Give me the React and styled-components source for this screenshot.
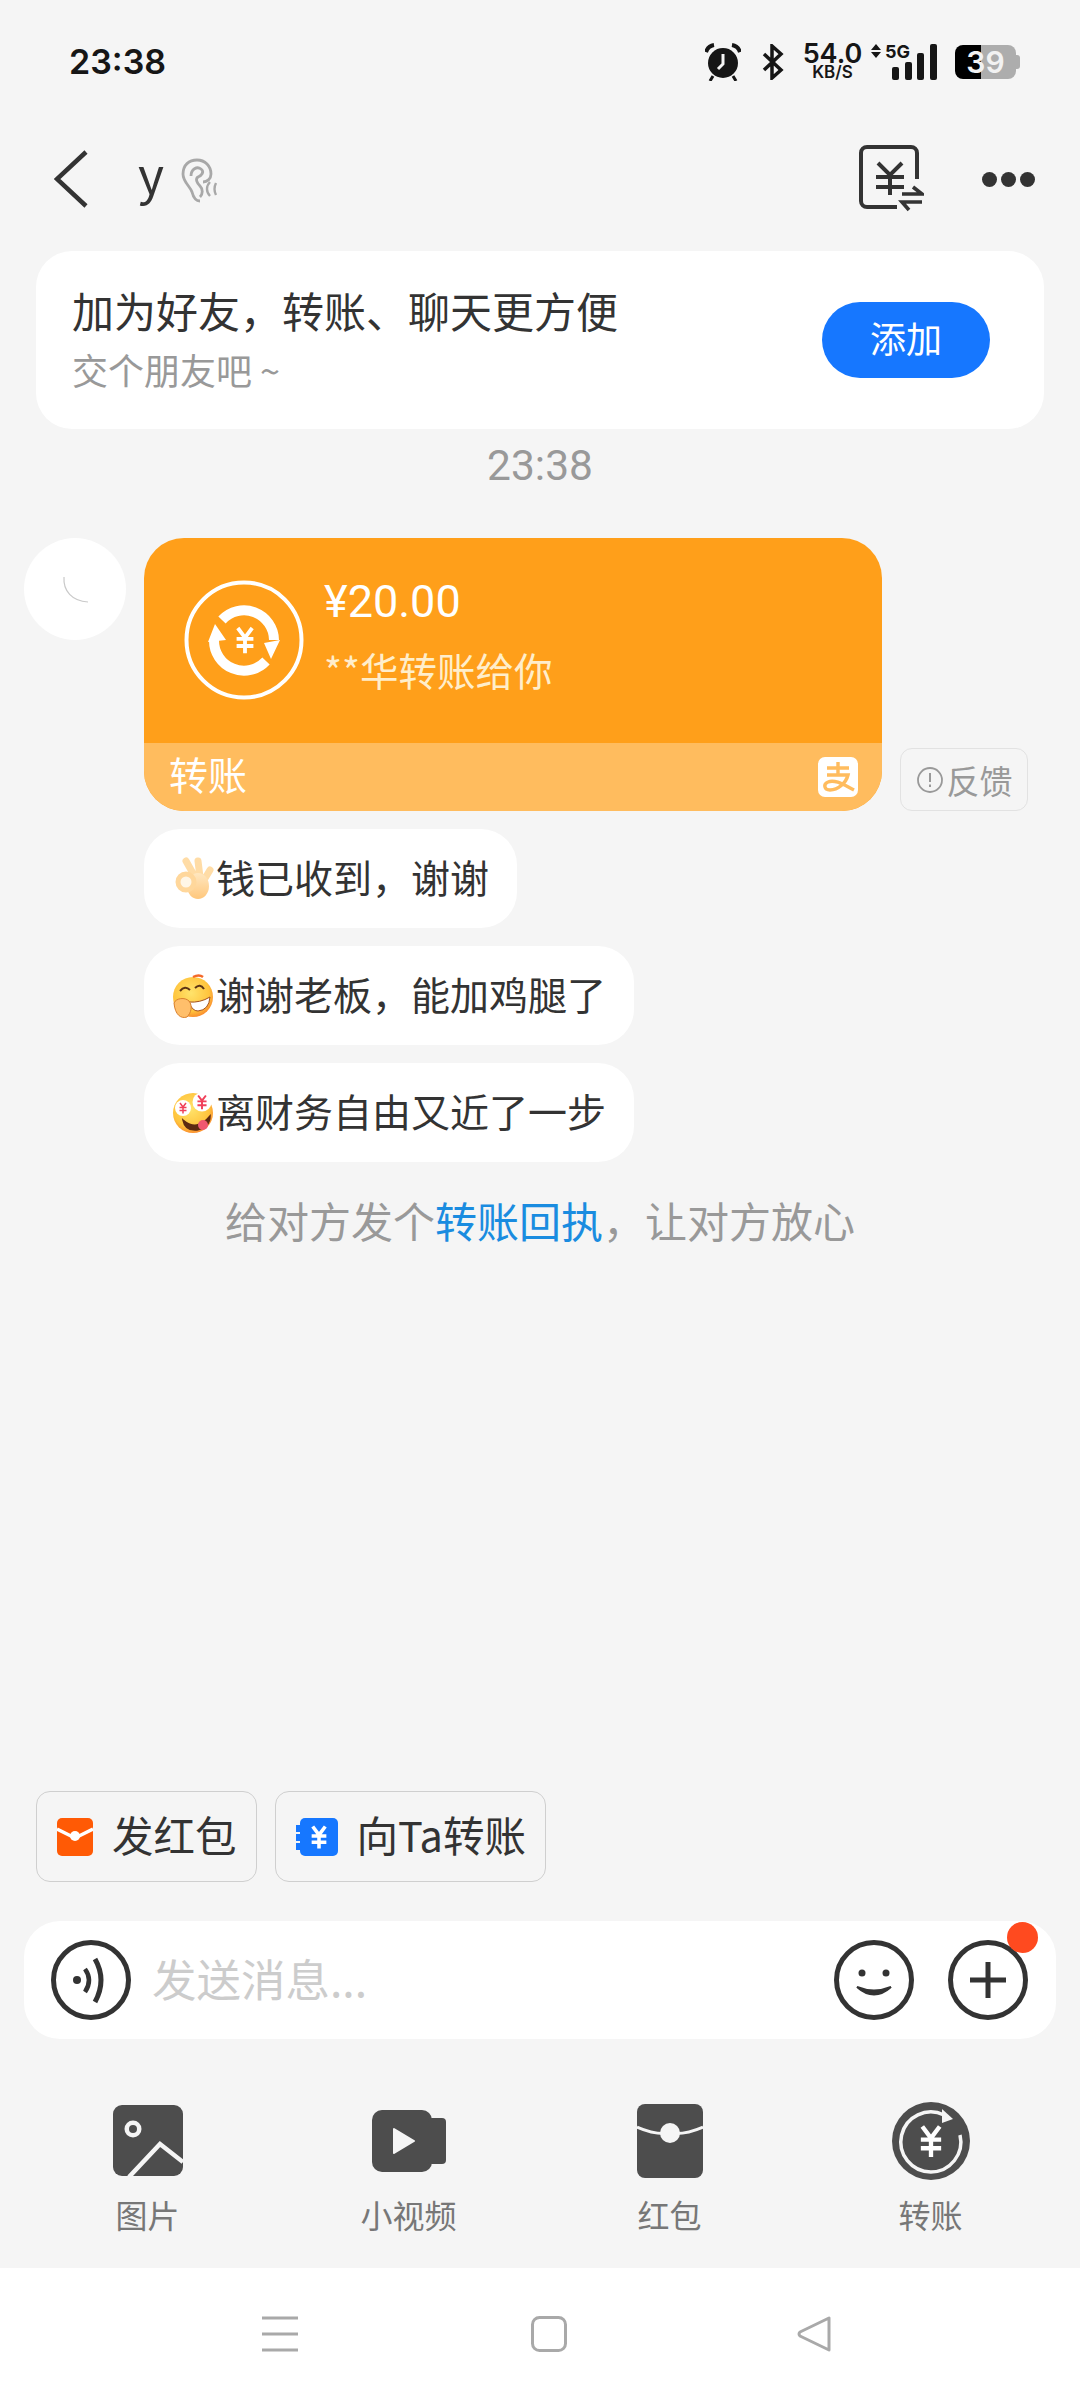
import React from "react";
import styled, { createGlobalStyle } from "styled-components";

const GlobalStyle = createGlobalStyle`
  html, body {
    margin: 0;
    padding: 0;
    background: #f5f5f5;
  }
  * {
    box-sizing: border-box;
  }
`;

const cjk = `"Noto Sans CJK SC", "Noto Sans", sans-serif`;

// yuan sign used inside several icons, drawn around 0,0
const Yuan = ({ x, y, s = 1, color = "#fff", w = 3 }) => (
  <path
    transform={`translate(${x} ${y}) scale(${s})`}
    d="M-6-10 0-2 6-10M0-2V11M-7-1H7M-7 5H7"
    fill="none"
    stroke={color}
    strokeWidth={w}
  />
);

const App = () => {
  return (
    <Page>
      <GlobalStyle />

      <StatusBar>
        <Clock>23:38</Clock>
        <StatusIcons>
          <svg width="36" height="38" viewBox="0 0 36 38">
            <circle cx="18" cy="20" r="15" fill="#161616" />
            <path d="M18 11v10l-5 5" fill="none" stroke="#f5f5f5" strokeWidth="3" />
            <path d="M1 9Q3 3 9 2M35 9Q33 3 27 2" fill="none" stroke="#161616" strokeWidth="4" />
            <path d="M8 33 5 38M28 33l3 5" stroke="#161616" strokeWidth="3" />
          </svg>
          <svg width="22" height="36" viewBox="0 0 22 36">
            <path d="M2 10 19 26 10 34V2l9 8L2 26" fill="none" stroke="#161616" strokeWidth="3.5" />
          </svg>
          <Speed>
            <b>54.0</b>
            <span>KB/S</span>
          </Speed>
          <Signal>
            <svg width="67" height="36" viewBox="0 0 67 36">
              <path d="M5 0 10 6H0ZM5 14 10 8H0Z" fill="#161616" />
              <rect x="21" y="23" width="7" height="13" rx="2" fill="#161616" />
              <rect x="34" y="18" width="7" height="18" rx="2" fill="#161616" />
              <rect x="46" y="9" width="7" height="27" rx="2" fill="#161616" />
              <rect x="59" y="0" width="7" height="36" rx="2" fill="#161616" />
            </svg>
            <FiveG>5G</FiveG>
          </Signal>
          <Battery>39</Battery>
        </StatusIcons>
      </StatusBar>

      <NavBar>
        <NavLeft>
          <svg width="34" height="58" viewBox="0 0 34 58">
            <path d="M32 2 3 29 32 56" fill="none" stroke="#333" strokeWidth="4.5" />
          </svg>
          <NavName>y</NavName>
          <svg width="55" height="55" viewBox="0 0 55 55">
            <path
              d="M27 49C22 49 20 44 19 40 17 34 10 30 10 22 10 13 16 8 24 8 32 8 38 14 38 22 38 27 34 30 30 30"
              fill="none"
              stroke="#a8a8a8"
              strokeWidth="2.8"
            />
            <path d="M18 24C18 17 24 14 28 17 32 20 28 24 25 25 22 27 24 31 27 34 30 37 30 42 27 45" fill="none" stroke="#a8a8a8" strokeWidth="2.8" />
            <path d="M37 30C33 34 33 40 37 44M43 31C41 35 41 39 43 43" fill="none" stroke="#a8a8a8" strokeWidth="2.4" />
          </svg>
        </NavLeft>
        <NavRight>
          <svg width="66" height="68" viewBox="0 0 66 68">
            <path d="M39 62H9a6 6 0 0 1-6-6V8a6 6 0 0 1 6-6h44a6 6 0 0 1 6 6V34" fill="none" stroke="#333" strokeWidth="4" />
            <path d="M20 18 32 30 44 18M18 32H46M18 42H46M32 30V50" fill="none" stroke="#333" strokeWidth="4" />
            <path d="M44 49H64L55 42M64 57H44L51 65" fill="none" stroke="#333" strokeWidth="3.6" />
          </svg>
          <Dots>
            <i />
            <i />
            <i />
          </Dots>
        </NavRight>
      </NavBar>

      <Chat>
        <FriendCard>
          <FriendText>
            <FriendTitle>加为好友，转账、聊天更方便</FriendTitle>
            <FriendSub>交个朋友吧 ~</FriendSub>
          </FriendText>
          <AddButton>添加</AddButton>
        </FriendCard>

        <TimeLabel>23:38</TimeLabel>

        <MessageRow>
          <Avatar>
            <svg width="30" height="32" viewBox="0 0 30 32">
              <path d="M3 3c-1 14 8 24 24 25" fill="none" stroke="#c9c9c9" strokeWidth="1.2" />
            </svg>
          </Avatar>
          <TransferCard>
            <TransferTop>
              <svg width="120" height="120" viewBox="0 0 120 120">
                <circle cx="60" cy="60" r="57.500" fill="none" stroke="#fff" strokeWidth="4" />
                <path d="M38 40A30 30 0 0 1 90 60" fill="none" stroke="#fff" strokeWidth="10" />
                <path d="M30 60A30 30 0 0 0 82 81" fill="none" stroke="#fff" strokeWidth="10" />
                <path d="M31 44 24 62 42 60ZM80 63 96 60 87 79Z" fill="#fff" />
                <Yuan x={61} y={60} s={1.2} w={3.2} />
              </svg>
              <TransferText>
                <Amount>¥20.00</Amount>
                <Payer>**华转账给你</Payer>
              </TransferText>
            </TransferTop>
            <TransferFoot>
              <FootLabel>转账</FootLabel>
              <AlipayMark>
                <svg width="40" height="40" viewBox="0 0 40 40">
                  <rect width="40" height="40" rx="7" fill="#fff" />
                  <path
                    d="M9 11H31M20 5V18M9 18H30C28 26 20 33 12 33 6 33 5 27 10 25 17 22 26 28 36 33"
                    fill="none"
                    stroke="#ffbc5e"
                    strokeWidth="3.4"
                  />
                </svg>
              </AlipayMark>
            </TransferFoot>
          </TransferCard>
          <Feedback>
            <svg width="28" height="28" viewBox="0 0 28 28">
              <circle cx="14" cy="14" r="12" fill="none" stroke="#999" strokeWidth="1.8" />
              <path d="M14 7v9M14 18.500v2.500" stroke="#999" strokeWidth="2" />
            </svg>
            反馈
          </Feedback>
        </MessageRow>

        <Bubble>
          <svg width="42" height="44" viewBox="0 0 42 44">
            <defs>
              <linearGradient id="skin" x1="0" y1="0" x2="0" y2="1">
                <stop offset="0" stopColor="#ffe7c0" />
                <stop offset="1" stopColor="#ffc77c" />
              </linearGradient>
            </defs>
            <path d="M14 4 23 20M26 4 28 20M38 13 32 23" fill="none" stroke="#ffdca6" strokeWidth="7" strokeLinecap="round" />
            <ellipse cx="26" cy="29" rx="11" ry="13" fill="url(#skin)" />
            <circle cx="14" cy="25" r="8" fill="#fff6e6" stroke="#ffd79b" strokeWidth="5" />
          </svg>
          <BubbleText>钱已收到，谢谢</BubbleText>
        </Bubble>
        <Bubble>
          <svg width="42" height="44" viewBox="0 0 42 44">
            <defs>
              <radialGradient id="face" cx="0.45" cy="0.4" r="0.65">
                <stop offset="0" stopColor="#ffe36b" />
                <stop offset="0.7" stopColor="#ffc43d" />
                <stop offset="1" stopColor="#f9802b" />
              </radialGradient>
            </defs>
            <circle cx="21" cy="23" r="20" fill="url(#face)" />
            <path d="M8 17q5-6 10-1M23 14q5-5 9 1" fill="none" stroke="#5c3314" strokeWidth="2" />
            <path d="M17 28Q28 29 38 23 37 36 26 37 20 37 17 28Z" fill="#fff" stroke="#a3501c" strokeWidth="1" />
            <path d="M2 29C4 24 13 23 17 27 21 32 19 39 15 43 9 45 3 41 2 29Z" fill="#ffbf6b" stroke="#d9802d" strokeWidth="1" />
            <path d="M21 3q6-3 10 0" fill="none" stroke="#f4692a" strokeWidth="2.500" />
          </svg>
          <BubbleText>谢谢老板，能加鸡腿了</BubbleText>
        </Bubble>
        <Bubble>
          <svg width="42" height="44" viewBox="0 0 42 44">
            <defs>
              <radialGradient id="face2" cx="0.45" cy="0.4" r="0.65">
                <stop offset="0" stopColor="#ffe36b" />
                <stop offset="0.7" stopColor="#ffc43d" />
                <stop offset="1" stopColor="#f9802b" />
              </radialGradient>
            </defs>
            <circle cx="21" cy="22" r="20" fill="url(#face2)" />
            <circle cx="11" cy="17" r="8" fill="#fff" />
            <circle cx="30" cy="11" r="9.500" fill="#fff" />
            <Yuan x={11} y={17} s={0.5} color="#f0405a" w={3} />
            <Yuan x={30} y={11} s={0.65} color="#f0405a" w={3} />
            <path d="M11 29Q25 41 38 25 38 36 25 39 13 40 11 29Z" fill="#5d2a12" stroke="#5d2a12" strokeWidth="1.500" />
            <circle cx="31" cy="34" r="5" fill="#f0586f" />
          </svg>
          <BubbleText>离财务自由又近了一步</BubbleText>
        </Bubble>

        <Hint>
          给对方发个<HintLink>转账回执</HintLink>，让对方放心
        </Hint>
      </Chat>

      <QuickRow>
        <QuickButton>
          <svg width="36" height="38" viewBox="0 0 36 38">
            <rect width="36" height="38" rx="5" fill="#ff5a05" />
            <path d="M0 11 14 18Q18 20 22 18L36 11" fill="none" stroke="#fff" strokeWidth="3.500" />
            <circle cx="18" cy="18" r="5" fill="#fff" />
          </svg>
          <QuickLabel>发红包</QuickLabel>
        </QuickButton>
        <QuickButton>
          <svg width="42" height="38" viewBox="0 0 42 38">
            <rect x="4" width="38" height="38" rx="5" fill="#1677ff" />
            <path d="M4 8H1v5h3M4 17H1v5h3M4 26H1v5h3" fill="#1677ff" stroke="#1677ff" strokeWidth="2" />
            <Yuan x={23} y={19} s={1.05} w={3.400} />
          </svg>
          <QuickLabel>向Ta转账</QuickLabel>
        </QuickButton>
      </QuickRow>

      <InputBar>
        <RoundIcon>
          <svg width="80" height="80" viewBox="0 0 80 80">
            <circle cx="40" cy="40" r="37.500" fill="none" stroke="#333" strokeWidth="5" />
            <circle cx="26" cy="40" r="4" fill="#333" />
            <path d="M34 29Q42 40 34 52" fill="none" stroke="#333" strokeWidth="4.500" />
            <path d="M44 19Q56 40 44 62" fill="none" stroke="#333" strokeWidth="5" />
          </svg>
        </RoundIcon>
        <Placeholder>发送消息...</Placeholder>
        <RoundIcon>
          <svg width="80" height="80" viewBox="0 0 80 80">
            <circle cx="40" cy="40" r="37.500" fill="none" stroke="#333" strokeWidth="5" />
            <circle cx="28" cy="33" r="3.500" fill="#333" />
            <circle cx="52" cy="33" r="3.500" fill="#333" />
            <path d="M23 47Q40 62 57 47Q40 54 23 47Z" fill="#333" stroke="#333" strokeWidth="2" />
          </svg>
        </RoundIcon>
        <RoundIcon>
          <svg width="80" height="80" viewBox="0 0 80 80">
            <circle cx="40" cy="40" r="37.500" fill="none" stroke="#333" strokeWidth="5" />
            <path d="M22 40H58M40 22V58" fill="none" stroke="#333" strokeWidth="5" />
          </svg>
          <RedDot />
        </RoundIcon>
      </InputBar>

      <ToolRow>
        <Tool>
          <ToolIcon>
            <svg width="70" height="72" viewBox="0 0 70 72">
              <rect width="70" height="71" rx="9" fill="#4d4d4d" />
              <circle cx="20" cy="24" r="8.500" fill="#f5f5f5" />
              <circle cx="20" cy="24" r="4" fill="#4d4d4d" />
              <path d="M16 72 47 39 70 57" fill="none" stroke="#f5f5f5" strokeWidth="4.500" />
            </svg>
          </ToolIcon>
          图片
        </Tool>
        <Tool>
          <ToolIcon>
            <svg width="74" height="62" viewBox="0 0 74 62">
              <rect width="60" height="62" rx="10" fill="#4d4d4d" />
              <rect x="56" y="8" width="18" height="46" rx="4" fill="#4d4d4d" />
              <path d="M22 19 42 31 22 43Z" fill="#f5f5f5" stroke="#f5f5f5" strokeWidth="2" strokeLinejoin="round" />
            </svg>
          </ToolIcon>
          小视频
        </Tool>
        <Tool>
          <ToolIcon>
            <svg width="66" height="74" viewBox="0 0 66 74">
              <rect width="66" height="74" rx="8" fill="#4d4d4d" />
              <path d="M0 23Q18 31 33 29 48 31 66 23" fill="none" stroke="#f5f5f5" strokeWidth="3" />
              <circle cx="33" cy="29" r="10" fill="#f5f5f5" />
            </svg>
          </ToolIcon>
          红包
        </Tool>
        <Tool>
          <ToolIcon>
            <svg width="78" height="78" viewBox="0 0 78 78">
              <circle cx="39" cy="39" r="39" fill="#4d4d4d" />
              <path d="M68 33A30 30 0 1 1 52 13" fill="none" stroke="#f5f5f5" strokeWidth="3.500" />
              <path d="M50 7 61 17 50 21Z" fill="#f5f5f5" />
              <Yuan x={39} y={39} s={1.45} w={3} />
            </svg>
          </ToolIcon>
          转账
        </Tool>
      </ToolRow>

      <SystemNav>
        <svg width="36" height="36" viewBox="0 0 36 36">
          <path d="M0 2H36M0 18H36M0 34H36" stroke="#a9a9a9" strokeWidth="3" />
        </svg>
        <svg width="36" height="36" viewBox="0 0 36 36">
          <rect x="1.500" y="1.500" width="33" height="33" rx="7" fill="none" stroke="#a9a9a9" strokeWidth="3" />
        </svg>
        <svg width="36" height="36" viewBox="0 0 36 36">
          <path d="M32 2V34L3 20Q1 18 3 16Z" fill="none" stroke="#a9a9a9" strokeWidth="3" strokeLinejoin="round" />
        </svg>
      </SystemNav>
    </Page>
  );
};

export default App;

// Styled Components
const Page = styled.div`
  width: 1080px;
  height: 2400px;
  display: flex;
  flex-direction: column;
  overflow: hidden;
  background: #f5f5f5;
  font-family: ${cjk};
`;

const StatusBar = styled.div`
  height: 124px;
  flex: none;
  display: flex;
  align-items: center;
  justify-content: space-between;
  padding: 0 60px 0 69px;
  color: #161616;
`;

const Clock = styled.div`
  margin-top: -2px;
  font-family: Inter, sans-serif;
  font-size: 34px;
  font-weight: 600;
`;

const StatusIcons = styled.div`
  display: flex;
  align-items: center;
  gap: 17px;

  > svg:first-child {
    margin-right: 4px;
  }
`;

const Speed = styled.div`
  width: 57px;
  margin: 0 -7px 0 3px;
  display: flex;
  flex-direction: column;
  align-items: center;
  font-family: Inter, sans-serif;
  line-height: 1;
  white-space: nowrap;

  b {
    font-size: 27px;
    font-weight: 600;
    line-height: 21px;
  }

  span {
    font-size: 17px;
    font-weight: 600;
  }
`;

const Signal = styled.div`
  position: relative;
  width: 67px;
  height: 36px;
`;

const FiveG = styled.span`
  position: absolute;
  left: 14px;
  top: -3px;
  font-family: Inter, sans-serif;
  font-size: 18px;
  font-weight: 700;
`;

const Battery = styled.div`
  position: relative;
  width: 61px;
  height: 34px;
  margin-right: 4px;
  border-radius: 8px;
  background: linear-gradient(to right, #000 43%, #adadad 43%);
  color: #f2f2f2;
  font-family: Inter, sans-serif;
  font-size: 30px;
  font-weight: 600;
  line-height: 34px;
  text-align: center;

  &::after {
    content: "";
    position: absolute;
    right: -4px;
    top: 10px;
    width: 4px;
    height: 14px;
    border-radius: 0 3px 3px 0;
    background: #adadad;
  }
`;

const NavBar = styled.div`
  height: 110px;
  flex: none;
  display: flex;
  align-items: center;
  justify-content: space-between;
  padding: 0 45px 0 54px;
`;

const NavLeft = styled.div`
  display: flex;
  align-items: center;
`;

const NavName = styled.div`
  margin: -14px 9px 0 50px;
  color: #333;
  font-size: 50px;
  font-weight: 400;
`;

const NavRight = styled.div`
  display: flex;
  align-items: center;
  gap: 58px;
`;

const Dots = styled.div`
  display: flex;
  gap: 4px;

  i {
    width: 15px;
    height: 15px;
    border-radius: 50%;
    background: #333;
  }
`;

const Chat = styled.div`
  flex: 1;
  padding-top: 17px;
`;

const FriendCard = styled.div`
  height: 178px;
  margin: 0 36px;
  padding: 0 54px 0 36px;
  display: flex;
  align-items: center;
  justify-content: space-between;
  border-radius: 36px;
  background: #fff;
`;

const FriendText = styled.div`
  margin-top: -6px;
`;

const FriendTitle = styled.div`
  color: #333;
  font-size: 42px;
  line-height: 60px;
`;

const FriendSub = styled.div`
  margin-top: 4px;
  color: #999;
  font-size: 36px;
  line-height: 50px;
`;

const AddButton = styled.div`
  width: 168px;
  height: 76px;
  border-radius: 38px;
  background: #1677ff;
  color: #fff;
  font-size: 36px;
  line-height: 70px;
  text-align: center;
`;

const TimeLabel = styled.div`
  height: 74px;
  color: #999;
  font-family: Roboto, sans-serif;
  font-size: 42.5px;
  line-height: 74px;
  text-align: center;
`;

const MessageRow = styled.div`
  margin-top: 35px;
  padding-left: 24px;
  display: flex;
  align-items: flex-start;
`;

const Avatar = styled.div`
  width: 102px;
  height: 102px;
  flex: none;
  margin-right: 18px;
  padding: 36px 0 0 37px;
  border-radius: 50%;
  background: #fff;
`;

const TransferCard = styled.div`
  width: 738px;
  height: 273px;
  flex: none;
  display: flex;
  flex-direction: column;
  overflow: hidden;
  border-radius: 40px;
  background: #ff9f1a;
`;

const TransferTop = styled.div`
  flex: 1;
  display: flex;
  align-items: flex-start;
  gap: 20px;
  padding: 42px 0 0 40px;
`;

const TransferText = styled.div`
  margin-top: -18px;
`;

const Amount = styled.div`
  color: #fff;
  font-family: Roboto, sans-serif;
  font-size: 45px;
  line-height: 80px;
`;

const Payer = styled.div`
  margin-top: -8px;
  color: #ffeecb;
  font-size: 38.5px;
  line-height: 70px;
`;

const TransferFoot = styled.div`
  height: 68px;
  flex: none;
  display: flex;
  align-items: center;
  justify-content: space-between;
  padding: 0 24px 0 25px;
  background: #ffbc5e;
  color: #fff;
  font-size: 39px;
`;

const FootLabel = styled.span`
  margin-top: -8px;
`;

const AlipayMark = styled.div`
  display: flex;
`;

const Feedback = styled.div`
  width: 128px;
  height: 63px;
  margin: 210px 0 0 18px;
  display: flex;
  align-items: center;
  justify-content: center;
  gap: 3px;
  border: 1px solid #e2e2e2;
  border-radius: 12px;
  color: #999;
  font-size: 33px;
`;

const Bubble = styled.div`
  width: fit-content;
  height: 99px;
  margin: 18px 0 0 144px;
  padding: 0 28px 0 28px;
  display: flex;
  align-items: center;
  border-radius: 36px;
  background: #fff;
  color: #333;
  font-size: 39px;

  svg {
    margin-right: 2px;
    flex: none;
  }
`;

const BubbleText = styled.span`
  margin-top: -6px;
`;

const Hint = styled.div`
  margin-top: 28px;
  color: #999;
  font-size: 42px;
  line-height: 60px;
  text-align: center;
`;

const HintLink = styled.span`
  color: #1a8ce0;
`;

const QuickRow = styled.div`
  flex: none;
  display: flex;
  gap: 18px;
  padding-left: 36px;
`;

const QuickButton = styled.div`
  height: 91px;
  padding: 0 19px 0 20px;
  display: flex;
  align-items: center;
  gap: 19px;
  border: 1.5px solid #cfcfcf;
  border-radius: 14px;
  color: #333;
  font-size: 41.5px;
  white-space: nowrap;
`;

const QuickLabel = styled.span`
  margin-top: -5px;
`;

const InputBar = styled.div`
  height: 118px;
  flex: none;
  margin: 39px 24px 0;
  padding: 0 28px 0 27px;
  display: flex;
  align-items: center;
  border-radius: 36px;
  background: #fff;
`;

const RoundIcon = styled.div`
  position: relative;
  width: 80px;
  height: 80px;
  flex: none;
  display: flex;

  & + & {
    margin-left: 34px;
  }
`;

const Placeholder = styled.div`
  flex: 1;
  margin: -5px 0 0 21px;
  color: #ccc;
  font-size: 44.5px;
`;

const RedDot = styled.span`
  position: absolute;
  top: -18px;
  right: -10px;
  width: 31px;
  height: 31px;
  border-radius: 50%;
  background: #ff4a1f;
`;

const ToolRow = styled.div`
  height: 229px;
  flex: none;
  display: grid;
  grid-template-columns: repeat(4, 261px);
  padding: 55px 0 0 17px;
`;

const Tool = styled.div`
  display: flex;
  flex-direction: column;
  align-items: center;
  color: #777;
  font-size: 32px;
  line-height: 46px;
`;

const ToolIcon = styled.div`
  height: 94px;
  margin-bottom: 3px;
  display: flex;
  align-items: center;
  justify-content: center;
`;

const SystemNav = styled.div`
  height: 132px;
  flex: none;
  display: flex;
  align-items: center;
  padding-left: 262px;
  gap: 233px;
  background: #fff;

  svg:last-child {
    margin-left: -3px;
  }
`;
